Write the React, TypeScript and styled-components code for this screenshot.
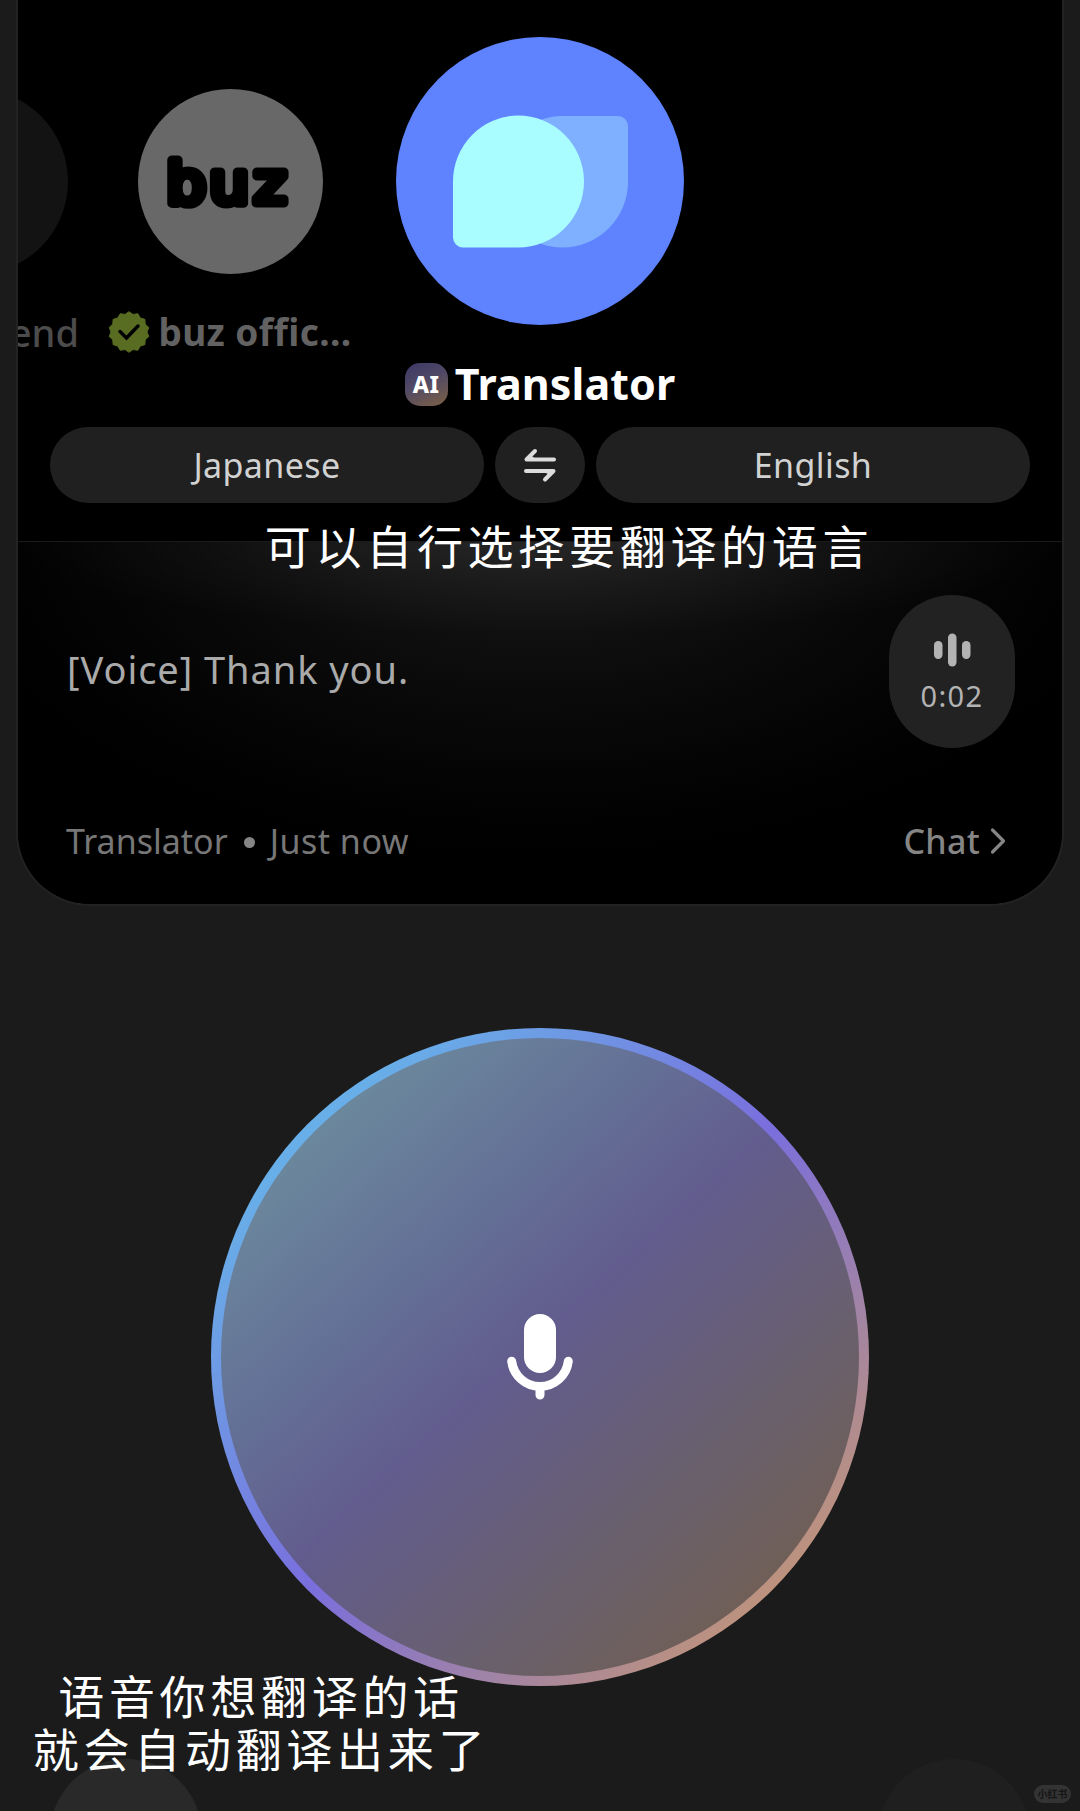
import React from "react";
import styled, { createGlobalStyle } from "styled-components";

const Global = createGlobalStyle`
  * { box-sizing: border-box; }
  body { margin: 0; background: #1b1b1b; }
`;

const Page = styled.div`
  position: relative;
  width: 1080px;
  height: 1811px;
  overflow: hidden;
  display: flex;
  flex-direction: column;
  background: #1b1b1b;
  font-family: "Noto Sans", "Noto Sans CJK SC", sans-serif;
`;

const Card = styled.main`
  flex: none;
  height: 906px;
  margin: 0 16px;
  border: solid #232323;
  border-width: 0 2px 2px;
  border-radius: 0 0 74px 74px;
  background: #000;
  overflow: hidden;
  display: flex;
  flex-direction: column;
`;

const Carousel = styled.section`
  height: 427px;
  flex: none;
  display: flex;
`;

const Contact = styled.div<{ $width: number; $top: number; $left?: number; $align?: string }>`
  flex: none;
  width: ${(p) => p.$width}px;
  margin-left: ${(p) => p.$left ?? 0}px;
  padding-top: ${(p) => p.$top}px;
  display: flex;
  flex-direction: column;
  align-items: ${(p) => p.$align ?? "center"};
`;

const Avatar = styled.div<{ $size: number; $color: string; $right?: number }>`
  flex: none;
  width: ${(p) => p.$size}px;
  height: ${(p) => p.$size}px;
  margin-right: ${(p) => p.$right ?? 0}px;
  border-radius: 50%;
  background: ${(p) => p.$color};
  display: flex;
  align-items: center;
  justify-content: center;
`;

const NameRow = styled.div<{ $gap: number; $top: number }>`
  display: flex;
  align-items: center;
  gap: ${(p) => p.$gap}px;
  margin-top: ${(p) => p.$top}px;
  height: 56px;
`;

const Text = styled.span<{ $size: number; $color: string; $weight?: number; $spacing?: number }>`
  font-size: ${(p) => p.$size}px;
  font-weight: ${(p) => p.$weight ?? 400};
  letter-spacing: ${(p) => p.$spacing ?? 0}px;
  color: ${(p) => p.$color};
  line-height: 1.3;
  white-space: nowrap;
`;

const AiBadge = styled.span`
  width: 43px;
  height: 43px;
  border-radius: 15px;
  background: linear-gradient(155deg, #3d3a66 5%, #514965 45%, #7d6145 100%);
  color: #fff;
  font-weight: 800;
  font-size: 23px;
  line-height: 42px;
  letter-spacing: 0.5px;
  text-align: center;
`;

const Languages = styled.section`
  flex: none;
  height: 114px;
  padding: 0 32px;
  display: flex;
  gap: 11px;
`;

const Pill = styled.button<{ $width?: number }>`
  height: 76px;
  ${(p) => (p.$width ? `width: ${p.$width}px; flex: none;` : "flex: 1;")}
  padding: 0;
  border: 0;
  border-radius: 38px;
  background: #202020;
  font-family: inherit;
  display: flex;
  align-items: center;
  justify-content: center;
`;

const MessagePanel = styled.section`
  flex: 1;
  border-top: 1px solid #1a1a1a;
  padding: 53px 47px 0 48px;
  background:
    radial-gradient(ellipse 540px 100px at 50% -8px, rgba(255, 255, 255, 0.08), rgba(255, 255, 255, 0.03) 55%, transparent),
    radial-gradient(ellipse 590px 320px at 50% -8px, #161616 0%, #101010 30%, #090909 55%, #030303 82%, #000 100%);
`;

const MessageRow = styled.div`
  height: 153px;
  display: flex;
  align-items: center;
  justify-content: space-between;
`;

const MessageText = styled.div`
  padding: 0 0 3px 1px;
`;

const VoiceButton = styled.button`
  width: 126px;
  height: 153px;
  border: 0;
  border-radius: 63px;
  background: #222;
  padding: 5px 0 0;
  font-family: inherit;
  display: flex;
  flex-direction: column;
  align-items: center;
  justify-content: center;
  gap: 10px;
`;

const FooterRow = styled.div`
  display: flex;
  align-items: center;
  height: 50px;
  margin-top: 68px;
  padding-right: 9px;
`;

const Dot = styled.i`
  width: 11px;
  height: 11px;
  border-radius: 50%;
  background: #858585;
  margin: 3px 15px 0 16px;
`;

const ChatLink = styled.div`
  margin-left: auto;
  display: flex;
  align-items: center;
  gap: 10px;
`;

const RecordButton = styled.button`
  flex: none;
  align-self: center;
  width: 658px;
  height: 658px;
  margin-top: 122px;
  padding: 10px;
  border: 0;
  border-radius: 50%;
  background: linear-gradient(135deg, #68aee8 16%, #7a6edd 50%, #be937c 86%);
`;

const RecordFace = styled.span`
  width: 100%;
  height: 100%;
  border-radius: 50%;
  background: linear-gradient(138deg, #6b879c 15%, #647297 32%, #625c8d 49%, #69606e 70%, #715f54 88%);
  display: flex;
  align-items: center;
  justify-content: center;
`;

const BottomBar = styled.nav`
  flex: none;
  height: 152px;
  margin-top: 73px;
  padding: 0 50px;
  display: flex;
  justify-content: space-between;
`;

const RoundButton = styled.span<{ $color: string }>`
  width: 152px;
  height: 152px;
  border-radius: 50%;
  background: ${(p) => p.$color};
`;

const Caption = styled.p<{ $left: number; $top: number; $width: number }>`
  position: absolute;
  left: ${(p) => p.$left}px;
  top: ${(p) => p.$top}px;
  width: ${(p) => p.$width}px;
  margin: 0;
  color: #fff;
  font-family: KaiTi, STKaiti, "Noto Sans CJK SC", sans-serif;
  font-size: 46px;
  line-height: 53px;
  letter-spacing: 4.7px;
  text-align: center;
  white-space: pre;
`;

const Watermark = styled.span`
  position: absolute;
  right: 9px;
  bottom: 8px;
  width: 37px;
  height: 18px;
  border-radius: 9px;
  background: #333;
  color: #151515;
  font: 700 10px/17px "Noto Sans CJK SC", sans-serif;
  text-align: center;
`;

const BuzLogo = () => (
  <svg width="140" height="100" viewBox="0 -10 140 100">
    <text
      transform="scale(1.09 1)"
      x="6 45.500 86"
      y="61"
      fontFamily="DejaVu Sans"
      fontSize="57"
      stroke="#000"
      strokeWidth="9"
      strokeLinejoin="round"
      strokeLinecap="round"
    >
      buz
    </text>
  </svg>
);

const TranslatorLogo = () => (
  <svg width="288" height="288" viewBox="0 0 288 288">
    <path d="M163 79H222a10 10 0 0 1 10 10V145a65.500 65.500 0 0 1-131 0a66 66 0 0 1 62-66Z" fill="#7fafff" />
    <path d="M122 78.500a66 66 0 1 1 0 132H67a10 10 0 0 1-10-10V145a65.500 66 0 0 1 65-66.500Z" fill="#a9fdff" />
  </svg>
);

const scallop = Array.from({ length: 28 }, (_, i) => {
  const angle = (i * Math.PI) / 14 - Math.PI / 2;
  const radius = i % 2 ? 18 : 20.3;
  return `${21 + radius * Math.cos(angle)},${21 + radius * Math.sin(angle)}`;
}).join(" ");

const VerifiedBadge = () => (
  <svg width="42" height="42" viewBox="0 0 42 42">
    <polygon points={scallop} fill="#586c22" stroke="#586c22" strokeWidth="1" strokeLinejoin="round" />
    <path d="m12 20.500 6.500 6.500 11.500-12" fill="none" stroke="#000" strokeWidth="3.500" strokeLinecap="round" />
  </svg>
);

const SwapIcon = () => (
  <svg width="34" height="36" viewBox="0 0 34 36" fill="none" stroke="#dcdcdc" strokeWidth="4" strokeLinecap="round" strokeLinejoin="round">
    <path d="M31 12.500H3.500L12 4M5 11.500h4" />
    <path d="M3 24H30.500L22 32.500M29 25h-4" />
  </svg>
);

const WaveIcon = () => (
  <svg width="38" height="34" viewBox="0 0 38 34" fill="#b3b3b3">
    <rect x="1" y="8" width="8.500" height="18" rx="4.200" />
    <rect x="15" y="0.500" width="8.500" height="33" rx="4.200" />
    <rect x="29" y="8" width="8.500" height="18" rx="4.200" />
  </svg>
);

const Chevron = () => (
  <svg width="16" height="28" viewBox="0 0 16 28" fill="none" stroke="#858585" strokeWidth="3.200" strokeLinecap="round" strokeLinejoin="round">
    <path d="m2.500 3 11 11-11 11" />
  </svg>
);

const MicIcon = () => (
  <svg width="68" height="88" viewBox="0 0 68 88" fill="none" stroke="#fff" strokeWidth="9" strokeLinecap="round">
    <rect x="18" y="1" width="32" height="59" rx="16" fill="#fff" stroke="none" />
    <path d="M5.700 48.300a28.500 28.500 0 0 0 56.600 0M34 73.500v8.500" />
  </svg>
);

export default function App() {
  return (
    <Page>
      <Global />
      <Card>
        <Carousel>
          <Contact $width={61} $top={89} $align="flex-end">
            <Avatar $size={185} $color="#131313" $right={11} />
            <NameRow $gap={0} $top={31}>
              <Text $size={38} $color="#4c4c4c" $weight={500}>end</Text>
            </NameRow>
          </Contact>
          <Contact $width={242} $top={89} $left={30}>
            <Avatar $size={185} $color="#686868">
              <BuzLogo />
            </Avatar>
            <NameRow $gap={8} $top={30}>
              <VerifiedBadge />
              <Text $size={37} $color="#626262" $weight={700} $spacing={0.4}>buz offic...</Text>
            </NameRow>
          </Contact>
          <Contact $width={288} $top={37} $left={45}>
            <Avatar $size={288} $color="#5f83ff">
              <TranslatorLogo />
            </Avatar>
            <NameRow $gap={7} $top={31}>
              <AiBadge>AI</AiBadge>
              <Text $size={43} $color="#fff" $weight={700} $spacing={0.1}>Translator</Text>
            </NameRow>
          </Contact>
        </Carousel>
        <Languages>
          <Pill><Text $size={34} $color="#d2d2d2" $spacing={0.4}>Japanese</Text></Pill>
          <Pill $width={90}><SwapIcon /></Pill>
          <Pill><Text $size={34} $color="#d2d2d2" $spacing={0.4}>English</Text></Pill>
        </Languages>
        <MessagePanel>
          <MessageRow>
            <MessageText>
              <Text $size={38} $color="#aaa" $spacing={0.95}>[Voice] Thank you.</Text>
            </MessageText>
            <VoiceButton>
              <WaveIcon />
              <Text $size={29} $color="#b3b3b3" $spacing={1.4}>0:02</Text>
            </VoiceButton>
          </MessageRow>
          <FooterRow>
            <Text $size={34} $color="#777">Translator</Text>
            <Dot />
            <Text $size={34} $color="#777" $spacing={0.5}>Just now</Text>
            <ChatLink>
              <Text $size={34} $color="#858585" $weight={500} $spacing={0.3}>Chat</Text>
              <Chevron />
            </ChatLink>
          </FooterRow>
        </MessagePanel>
      </Card>
      <RecordButton>
        <RecordFace><MicIcon /></RecordFace>
      </RecordButton>
      <BottomBar>
        <RoundButton $color="#292929" />
        <RoundButton $color="#1f1f1f" />
      </BottomBar>
      <Caption $left={261} $top={518} $width={616}>可以自行选择要翻译的语言</Caption>
      <Caption $left={21} $top={1668} $width={480}>{"语音你想翻译的话\n就会自动翻译出来了"}</Caption>
      <Watermark>小红书</Watermark>
    </Page>
  );
}
